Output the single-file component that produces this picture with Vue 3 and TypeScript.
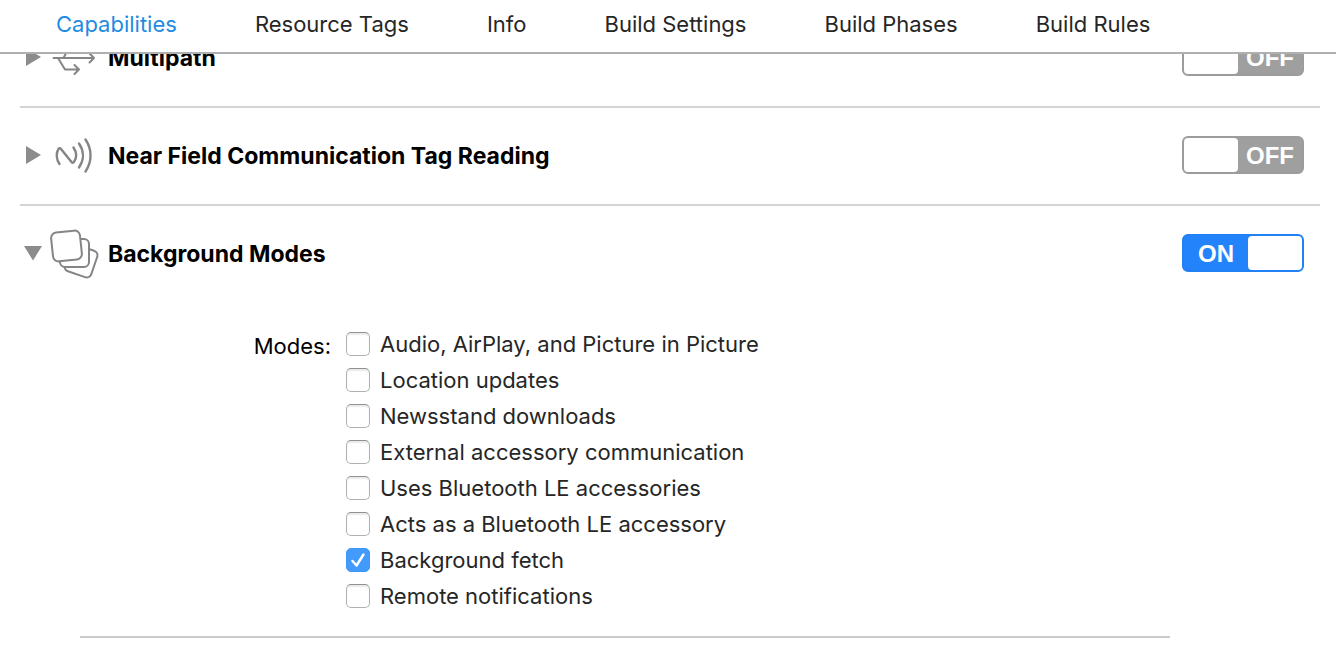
<script setup lang="ts">
import { reactive, ref } from 'vue'

type IconName = 'multipath' | 'nfc' | 'background'

interface Capability {
  id: IconName
  title: string
  enabled: boolean
  expanded: boolean
}

interface Mode {
  id: string
  label: string
  checked: boolean
}

const tabs: string[] = [
  'Capabilities',
  'Resource Tags',
  'Info',
  'Build Settings',
  'Build Phases',
  'Build Rules',
]
const activeTab = ref('Capabilities')

const capabilities = reactive<Capability[]>([
  { id: 'multipath', title: 'Multipath', enabled: false, expanded: false },
  { id: 'nfc', title: 'Near Field Communication Tag Reading', enabled: false, expanded: false },
  { id: 'background', title: 'Background Modes', enabled: true, expanded: true },
])

const modes = reactive<Mode[]>([
  { id: 'audio', label: 'Audio, AirPlay, and Picture in Picture', checked: false },
  { id: 'location', label: 'Location updates', checked: false },
  { id: 'newsstand', label: 'Newsstand downloads', checked: false },
  { id: 'external', label: 'External accessory communication', checked: false },
  { id: 'uses-ble', label: 'Uses Bluetooth LE accessories', checked: false },
  { id: 'acts-ble', label: 'Acts as a Bluetooth LE accessory', checked: false },
  { id: 'fetch', label: 'Background fetch', checked: true },
  { id: 'remote', label: 'Remote notifications', checked: false },
])
</script>

<template>
  <div class="editor">
    <nav class="tabs" aria-label="Target editor">
      <button
        v-for="tab in tabs"
        :key="tab"
        type="button"
        class="tab"
        :class="{ active: tab === activeTab }"
        @click="activeTab = tab"
      >{{ tab }}</button>
    </nav>

    <main class="list">
      <section v-for="cap in capabilities" :key="cap.id" class="capability">
        <header class="row">
          <button
            type="button"
            class="disclosure"
            :aria-expanded="cap.expanded"
            :aria-label="cap.title"
            @click="cap.expanded = !cap.expanded"
          >
            <svg width="18" height="18" viewBox="0 0 18 18" fill="#8c8c8c" aria-hidden="true">
              <path v-if="cap.expanded" d="M0 2h18L9 16.5z" />
              <path v-else d="M2 0v18l15-9z" />
            </svg>
          </button>

          <svg class="icon" width="48" height="48" viewBox="0 0 48 48" aria-hidden="true">
            <g v-if="cap.id === 'multipath'">
              <path d="M3.5 25H44M39.5 20.5 44 25l-4.5 4.5" />
              <path d="M8 25l7 11.500H29M24.500 32l4.500 4.500-4.500 4.500" />
              <path d="M13.500 25l6-11.500H34M29.500 9l4.500 4.500-4.500 4.500" />
            </g>
            <g v-else-if="cap.id === 'nfc'" stroke-width="2.4">
              <path d="M9.500 33C6 28 6 21.500 8.500 18 9.300 16.800 10.200 17 11 18L21.500 31c.8 1 1.700 1.200 2.400 0C26.800 27 26.800 21.500 23.500 16.500" />
              <path d="M29 12.500C34.200 20 34.200 29 29 36.500" />
              <path d="M35.500 8.500C42.200 18.500 42.200 30.500 35.500 40.500" />
            </g>
            <g v-else fill="#fff" stroke-width="2">
              <rect x="17" y="18" width="28" height="28" rx="5" transform="rotate(19 31 32)" />
              <rect x="10" y="10" width="29" height="28" rx="5" />
              <rect x="2" y="2.500" width="29" height="29" rx="5.500" transform="rotate(-6 16.500 17)" />
            </g>
          </svg>

          <h2 class="title">{{ cap.title }}</h2>

          <button
            type="button"
            role="switch"
            class="switch"
            :class="{ on: cap.enabled }"
            :aria-checked="cap.enabled"
            :aria-label="cap.title"
            @click="cap.enabled = !cap.enabled"
          >
            <span class="state">{{ cap.enabled ? 'ON' : 'OFF' }}</span>
            <span class="knob"></span>
          </button>
        </header>

        <div v-if="cap.id === 'background' && cap.expanded" class="details">
          <div class="modes" role="group" aria-labelledby="modes-label">
            <span id="modes-label" class="modes-label">Modes:</span>
            <ul class="options">
              <li v-for="mode in modes" :key="mode.id">
                <label class="option" :for="mode.id">
                  <span class="box">
                    <input :id="mode.id" v-model="mode.checked" type="checkbox" />
                    <svg v-if="mode.checked" width="24" height="24" viewBox="0 0 24 24" aria-hidden="true">
                      <path d="M6.500 13l4 4.500L17.500 6.500" />
                    </svg>
                  </span>
                  <span>{{ mode.label }}</span>
                </label>
              </li>
            </ul>
          </div>
        </div>
      </section>
    </main>
  </div>
</template>

<style>
body {
  margin: 0;
  background: #fff;
}
</style>

<style scoped>
.editor {
  height: 100vh;
  overflow: hidden;
  background: #fff;
  color: #262626;
  font-family: Inter, "Liberation Sans", sans-serif;
  font-size: 22px;
  line-height: 28px;
}

button {
  margin: 0;
  padding: 0;
  border: 0;
  background: none;
  color: inherit;
  font: inherit;
}

.tabs {
  position: relative;
  z-index: 1;
  display: flex;
  gap: 78px;
  height: 52px;
  padding-left: 56px;
  border-bottom: 2px solid #b0b0b0;
  background: #fff;
}

.tab {
  padding-bottom: 4px;
  white-space: nowrap;
}

.tab.active {
  color: #1f8ce2;
}

/* The list is scrolled part of the way under the tab bar. */
.list {
  margin-top: -44px;
  padding: 0 16px 0 20px;
}

.capability:not(:last-child) {
  border-bottom: 2px solid #d4d4d4;
}

.row {
  display: flex;
  align-items: center;
  height: 94px;
  padding: 0 16px 2px 4px;
}

.disclosure {
  display: flex;
  margin-right: 8px;
}

.icon {
  flex: none;
  margin-right: 10px;
  overflow: visible;
  fill: none;
  stroke: #858585;
  stroke-width: 2;
  stroke-linecap: round;
  stroke-linejoin: round;
}

.title {
  flex: 1;
  margin: 0;
  padding-top: 2px;
  color: #000;
  font-size: 23px;
  font-weight: 700;
}

.switch {
  display: flex;
  flex-direction: row-reverse;
  box-sizing: border-box;
  width: 122px;
  height: 38px;
  border: 2px solid #9c9c9c;
  border-radius: 6px;
  background: #9f9f9f;
}

.switch.on {
  flex-direction: row;
  border-color: #2180f3;
  background: #2383fa;
}

.state {
  flex: 1;
  color: #fff;
  font: bold 24px/36px "Liberation Sans", Arial, sans-serif;
  text-align: center;
}

.knob {
  width: 54px;
  height: 34px;
  border-radius: 4px;
  background: #fff;
}

.details {
  margin: 0 150px 0 60px;
  padding: 24px 0 22px;
  border-bottom: 2px solid #cbcbcb;
}

.modes {
  display: flex;
  gap: 15px;
}

.modes-label {
  width: 251px;
  padding-top: 6px;
  color: #000;
  text-align: right;
}

.options {
  margin: 0;
  padding: 0;
  list-style: none;
}

.option {
  display: flex;
  align-items: center;
  gap: 10px;
  height: 36px;
}

.box {
  display: grid;
  width: 24px;
  height: 24px;
}

.box > * {
  grid-area: 1 / 1;
}

.box input {
  appearance: none;
  box-sizing: border-box;
  width: 24px;
  height: 24px;
  margin: 0;
  border: 1px solid #b0b0b0;
  border-top-color: #909090;
  border-radius: 5px;
  background: #fff;
  box-shadow: inset 0 2px 1px #ececec;
}

.box input:checked {
  border-color: #3d98f8;
  background: #429bfa;
  box-shadow: none;
}

.box svg {
  pointer-events: none;
  fill: none;
  stroke: #fff;
  stroke-width: 2.5;
  stroke-linecap: round;
  stroke-linejoin: round;
}
</style>
